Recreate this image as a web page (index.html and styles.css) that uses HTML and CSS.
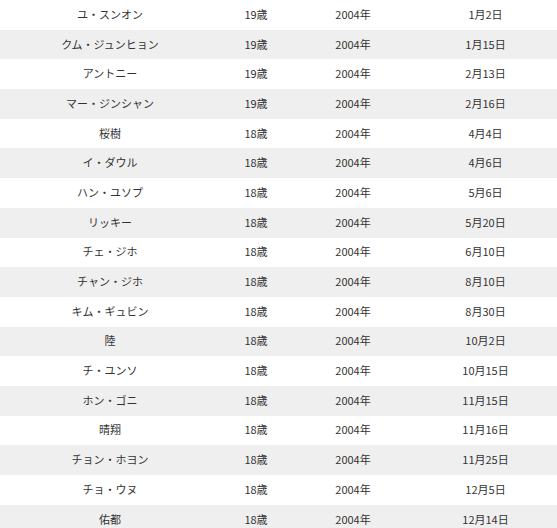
FILE: index.html
```html
<!DOCTYPE html>
<html lang="ja">
<head>
<meta charset="utf-8">
<link rel="stylesheet" href="styles.css">
</head>
<body>
<div class="table">
  <div class="row"><span>ユ・スンオン</span><span>19歳</span><span>2004年</span><span>1月2日</span></div>
  <div class="row"><span>クム・ジュンヒョン</span><span>19歳</span><span>2004年</span><span>1月15日</span></div>
  <div class="row"><span>アントニー</span><span>19歳</span><span>2004年</span><span>2月13日</span></div>
  <div class="row"><span>マー・ジンシャン</span><span>19歳</span><span>2004年</span><span>2月16日</span></div>
  <div class="row"><span>桜樹</span><span>18歳</span><span>2004年</span><span>4月4日</span></div>
  <div class="row"><span>イ・ダウル</span><span>18歳</span><span>2004年</span><span>4月6日</span></div>
  <div class="row"><span>ハン・ユソプ</span><span>18歳</span><span>2004年</span><span>5月6日</span></div>
  <div class="row"><span>リッキー</span><span>18歳</span><span>2004年</span><span>5月20日</span></div>
  <div class="row"><span>チェ・ジホ</span><span>18歳</span><span>2004年</span><span>6月10日</span></div>
  <div class="row"><span>チャン・ジホ</span><span>18歳</span><span>2004年</span><span>8月10日</span></div>
  <div class="row"><span>キム・ギュビン</span><span>18歳</span><span>2004年</span><span>8月30日</span></div>
  <div class="row"><span>陸</span><span>18歳</span><span>2004年</span><span>10月2日</span></div>
  <div class="row"><span>チ・ユンソ</span><span>18歳</span><span>2004年</span><span>10月15日</span></div>
  <div class="row"><span>ホン・ゴニ</span><span>18歳</span><span>2004年</span><span>11月15日</span></div>
  <div class="row"><span>晴翔</span><span>18歳</span><span>2004年</span><span>11月16日</span></div>
  <div class="row"><span>チョン・ホヨン</span><span>18歳</span><span>2004年</span><span>11月25日</span></div>
  <div class="row"><span>チョ・ウヌ</span><span>18歳</span><span>2004年</span><span>12月5日</span></div>
  <div class="row"><span>佑都</span><span>18歳</span><span>2004年</span><span>12月14日</span></div>
</div>
</body>
</html>
```
FILE: styles.css
```css
html, body {
  margin: 0;
  padding: 0;
  background: #fff;
}
body {
  font-family: "Noto Sans CJK JP", "Noto Sans", sans-serif;
  font-size: 11px;
  color: #333;
}
.table {
  display: flex;
  flex-direction: column;
}
.row {
  display: grid;
  grid-template-columns: 220px 72px 122px 1fr;
  height: 29.7px;
  box-sizing: border-box;
  padding-bottom: 2px;
  align-items: center;
  text-align: center;
}
.row:nth-child(even) {
  background: #efefef;
}
```
